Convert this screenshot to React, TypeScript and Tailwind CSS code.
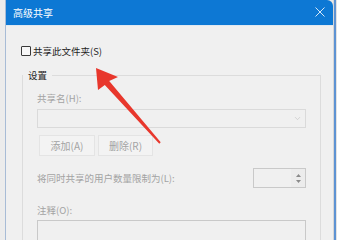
import { ChevronDown } from 'lucide-react';

const font = "font-['Noto_Sans_CJK_SC','Noto_Sans',sans-serif]";

function Spinner() {
  return (
    <div className="flex h-[20px] w-[53px] border border-[#c9c9c9] bg-[#f0f0f0]">
      <div className="flex-1" />
      <div className="flex w-[14px] flex-col items-center justify-center gap-[3px] bg-[#ececec]">
        <svg width="5" height="3" viewBox="0 0 5 3">
          <polygon points="2.5,0 5,3 0,3" fill="#8a8a8a" />
        </svg>
        <svg width="5" height="3" viewBox="0 0 5 3">
          <polygon points="0,0 5,0 2.5,3" fill="#8a8a8a" />
        </svg>
      </div>
    </div>
  );
}

function DisabledButton({ label, className }: { label: string; className?: string }) {
  return (
    <div
      className={`flex h-[21px] items-center justify-center border border-[#e4e4e4] bg-[#f3f3f3] text-[10px] leading-[14px] text-[#a3a3a3] ${className ?? ''}`}
    >
      {label}
    </div>
  );
}

export default function App() {
  return (
    <div className={`relative flex h-[240px] w-[337px] overflow-hidden bg-[#e8e8e8] ${font}`}>
      {/* window behind, left edge */}
      <div className="w-[5px] bg-[#ececec]" />
      <div className="w-px bg-[#a8bcd6]" />

      {/* dialog */}
      <div className="flex w-[327px] flex-col">
        {/* title bar */}
        <div className="flex h-[25px] shrink-0 items-center justify-between rounded-tr-[6px] bg-[#0d78d4] pl-[7px] pr-[8px]">
          <span className="text-[10px] leading-[14px] text-white">高级共享</span>
          <svg width="10" height="10" viewBox="0 0 10 10" className="mt-[-1px]">
            <path d="M0.5 0.5 L9.5 9.5 M9.5 0.5 L0.5 9.5" stroke="#d6e7f7" strokeWidth="1" />
          </svg>
        </div>
        <div className="h-px shrink-0 bg-[#dfe8f1]" />

        {/* body */}
        <div className="min-h-0 flex-1 overflow-hidden bg-[#f0f0f0] pl-[15px] pt-[18px]">
          <div className="flex items-center gap-[2px]">
            <div className="h-[10px] w-[10px] rounded-[1px] border border-[#3a3a3a] bg-[#f7f7f7]" />
            <span className="text-[9.5px] leading-[14px] text-[#1e1e1e]">共享此文件夹(S)</span>
          </div>

          <fieldset className="ml-[1px] mt-[10px] w-[299px] border border-[#dcdcdc] p-0">
            <legend className="px-[5px] text-[9.5px] leading-[14px] text-[#1e1e1e]">设置</legend>
            <div className="px-[14px] pt-[9px]">
              <div className="text-[9.5px] leading-[14px] text-[#a3a3a3]">共享名(H):</div>

              <div className="mt-[4px] flex h-[19px] items-center justify-end border border-[#dadada] bg-[#f0f0f0] pr-[3px]">
                <ChevronDown className="h-[9px] w-[9px] text-[#bdbdbd]" strokeWidth={1.5} />
              </div>

              <div className="ml-[2px] mt-[7px] flex gap-[3px]">
                <DisabledButton label="添加(A)" className="w-[56px]" />
                <DisabledButton label="删除(R)" className="w-[55px]" />
              </div>

              <div className="mt-[12px] flex items-center justify-between">
                <span className="text-[9.5px] leading-[14px] text-[#a3a3a3]">将同时共享的用户数量限制为(L):</span>
                <Spinner />
              </div>

              <div className="mt-[15px] text-[9.5px] leading-[14px] text-[#a3a3a3]">注释(O):</div>
              <div className="mt-[3px] h-[40px] border border-[#c9c9c9] bg-[#f0f0f0]" />
            </div>
          </fieldset>
        </div>
      </div>

      {/* window behind, right edge */}
      <div className="w-px bg-[#d6d6d6]" />
      <div className="w-[2px] bg-[#5e93d3]" />
      <div className="flex-1 bg-[#e3e3e3]" />

      {/* red annotation arrow */}
      <svg className="pointer-events-none absolute left-0 top-0" width="337" height="240" viewBox="0 0 337 240">
        <polygon
          points="96,68 118,77 109.2,81 160.7,142.3 159.3,143.7 104.8,85 98,90"
          fill="#e8372c"
        />
      </svg>
    </div>
  );
}
